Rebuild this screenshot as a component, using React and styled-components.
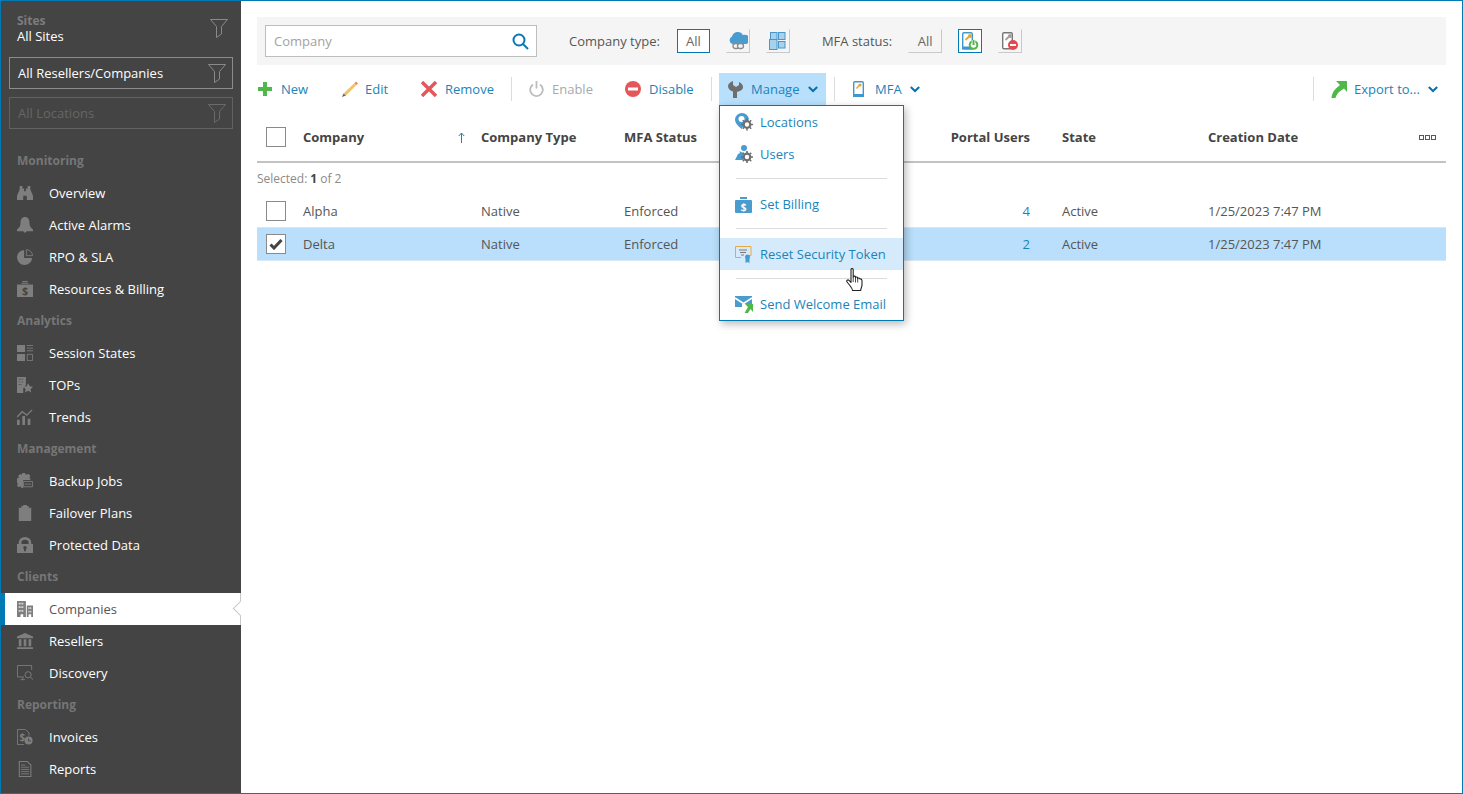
import React from "react";
import styled, { createGlobalStyle } from "styled-components";

const Global = createGlobalStyle`
  html, body { margin: 0; padding: 0; background: #fff; }
  * { box-sizing: border-box; }
  body { font-family: "Open Sans", "Noto Sans", sans-serif; font-size: 13px; color: #444; }
`;

const Frame = styled.div`
  width: 1463px; height: 794px; border: 1px solid #0079b5; display: flex; overflow: hidden; position: relative;
`;
const Sidebar = styled.aside`
  width: 240px; flex: none; background: #444; display: flex; flex-direction: column; padding-top: 12px;
`;
const SiteBlock = styled.div`
  height: 36px; margin: 0 13px 8px 16px; display: flex; justify-content: space-between; align-items: flex-start;
`;
const SiteLabel = styled.div`
  font-weight: 700; font-size: 12px; line-height: 15px; color: #7c7c7c;
`;
const SiteValue = styled.div`
  font-size: 13px; line-height: 16px; color: #fff;
`;
const SiteFunnel = styled.span`
  display: flex; margin-top: 6px;
`;
const FilterBox = styled.div`
  height: 32px; margin: 0 8px 8px 8px; padding: 0 6px 0 8px; display: flex; align-items: center; justify-content: space-between;
  border: 1px solid ${p => (p.$dim ? "#626262" : "#8c8c8c")};
  color: ${p => (p.$dim ? "#666" : "#fff")};
`;
const NavList = styled.nav`
  display: flex; flex-direction: column; margin-top: 8px;
`;
const NavHeading = styled.div`
  height: 32px; padding: 0 0 2px 16px; display: flex; align-items: center; font-weight: 700; font-size: 12px; color: #767676;
`;
const NavRow = styled.div`
  height: 32px; display: flex; align-items: center; position: relative; flex: none;
  padding-left: ${p => (p.$active ? "12px" : "16px")};
  background: ${p => (p.$active ? "#fff" : "transparent")};
  border-left: ${p => (p.$active ? "4px solid #0079b5" : "0")};
  border-right: ${p => (p.$active ? "1px solid #c8c8c8" : "0")};
  color: ${p => (p.$active ? "#555" : "#fff")};
`;
const NavIcon = styled.span`
  width: 32px; height: 18px; display: flex; align-items: center; flex: none;
`;
const Notch = styled.span`
  position: absolute; right: -6px; top: 10px; width: 11px; height: 11px; transform: rotate(45deg); background: #fff;
  border-left: 1px solid #c8c8c8; border-bottom: 1px solid #c8c8c8;
`;
const Main = styled.main`
  flex: 1; min-width: 0; padding: 16px 16px 0; position: relative;
`;
const FilterBar = styled.div`
  height: 48px; background: #f5f5f5; display: flex; align-items: center; padding-left: 8px;
`;
const Search = styled.div`
  width: 272px; height: 32px; background: #fff; border: 1px solid #bdbdbd; display: flex; align-items: center; justify-content: space-between;
  padding: 0 7px 0 8px; color: #a2a2a2; margin-right: 32px;
`;
const FilterLabel = styled.span`
  color: #555; margin-right: ${p => p.$gap}px;
`;
const Toggle = styled.button`
  width: ${p => p.$w || 24}px; height: 24px; padding: 0; margin: 0 ${p => p.$mr ?? 16}px 0 0; font: inherit; color: #666; background: transparent;
  display: flex; align-items: center; justify-content: center; cursor: default;
  border: 1px solid transparent;
  ${p => p.$on
    ? "border-color: #0079b5; background: #fff;"
    : "border-right-color: #c9c9c9; border-bottom-color: #c9c9c9;"}
`;
const Toolbar = styled.div`
  height: 32px; margin-top: 8px; display: flex; align-items: center; position: relative;
`;
const Action = styled.div`
  height: 32px; display: flex; align-items: center; flex: none; color: ${p => (p.$off ? "#a9a9a9" : "#1a84ba")};
  width: ${p => p.$w}px;
  padding-left: ${p => p.$pl ?? 0}px;
  background: ${p => (p.$open ? "#b8dffc" : "transparent")};
`;
const ActionIcon = styled.span`
  display: flex; align-items: center; width: ${p => p.$w}px; flex: none;
`;
const Chevron = styled.span`
  display: flex; margin-left: ${p => p.$ml}px;
`;
const Sep = styled.span`
  width: 1px; height: 24px; background: #dcdcdc; flex: none; margin: 0 ${p => p.$r ?? 7}px 0 ${p => p.$l ?? 0}px;
`;
const Spacer = styled.span` flex: 1; `;
const cols = "46px 178px 143px 300px 138px 146px 1fr";
const HeadRow = styled.div`
  display: grid; grid-template-columns: ${cols}; height: 50px; margin-top: 8px; align-items: center; border-bottom: 2px solid #c2c2c2;
  font-weight: 700; color: #444;
`;
const HeadCell = styled.div`
  display: flex; align-items: center; justify-content: ${p => (p.$right ? "flex-end" : "space-between")};
  padding-right: ${p => (p.$right ? "32px" : p.$pr || 0)}; height: 100%;
`;
const Check = styled.span`
  width: 20px; height: 20px; margin-left: 9px; border: 1px solid #8a8a8a; background: #fff; display: flex; align-items: center; justify-content: center;
`;
const Selected = styled.div`
  height: 32px; display: flex; align-items: center; font-size: 12px; color: #8a8a8a; gap: 3px; padding-bottom: 2px;
  b { color: #444; }
`;
const Row = styled.div`
  display: grid; grid-template-columns: ${cols}; height: 33px; align-items: center; color: #555;
  background: ${p => (p.$sel ? "#b9dffc" : "transparent")};
  border-bottom: 1px solid ${p => (p.$sel ? "#d8e9f5" : "#e4e4e4")};
`;
const Cell = styled.div`
  ${p => p.$right && "text-align: right; padding-right: 32px; color: #1a84ba;"}
`;
const Dots = styled.div`
  display: flex; gap: 1px; justify-content: flex-end; padding-right: 10px; align-items: center;
  i { width: 5px; height: 5px; border: 1px solid #0f6fa5; display: block; }
`;
const Menu = styled.div`
  position: absolute; left: 462px; top: 32px; width: 185px; height: 216px; background: #fff; border: 1px solid #0079b5;
  box-shadow: 2px 3px 8px rgba(0,0,0,.28); z-index: 5;
`;
const MenuItem = styled.div`
  height: 32px; display: flex; align-items: center; padding-left: 15px; color: #1a84ba;
  background: ${p => (p.$hover ? "#d5ebfc" : "transparent")};
`;
const MenuIcon = styled.span`
  width: 25px; display: flex; align-items: center; flex: none;
`;
const MenuSep = styled.div`
  height: 1px; background: #dcdcdc; margin: 8px 16px 9px;
`;
const Cursor = styled.span`
  position: absolute; left: 605px; top: 267px; z-index: 6; display: flex;
`;

const G = "#7e7e7e";
const Funnel = ({ c = "#8a8a8a" }) => (
  <svg width="18" height="19" viewBox="0 0 18 19" fill="none" stroke={c}><path d="M.5.500h17l-6 7v7.500l-5 3.500V7.500z" /></svg>
);
const I = ({ children }) => <svg width="16" height="16" viewBox="0 0 18 18">{children}</svg>;

const navIcons = {
  overview: <I><path fill={G} d="M3 1h3v3h2v3h2V4h2V1h3v4l3 7v5h-7v-5H7v5H0v-5l3-7z" /></I>,
  alarms: <I><path fill={G} d="M9 0c3.500 0 5 3 5 6 0 4 1 6 4 8v2H0v-2c3-2 4-4 4-8 0-3 1.500-6 5-6zM7 16h4l-2 2z" /></I>,
  rpo: <I><path fill={G} d="M8 1v9h9a8.500 8.500 0 1 1-9-9z" /><path fill="none" stroke={G} d="M10.500.8a7 7 0 0 1 7 6.700h-7z" /></I>,
  res: <I><path fill={G} d="M0 4h18v14H0z" /><path fill={G} d="M6 0h6v1H6zM5 2h8v1H5z" /><text x="9" y="15.500" fontSize="12" fontWeight="700" textAnchor="middle" fill="#444" fontFamily="Open Sans">$</text></I>,
  session: <I><path fill={G} d="M0 0h9v8H0zM0 10h9v8H0z" /><path fill="none" stroke={G} d="M11 .5h7M11 3.500h7M11 6.500h7M11.500 10.500h6v7h-6z" /></I>,
  tops: <I><path fill={G} d="M0 0h10v9l-3 4v5H0z" /><path fill="#444" d="M2 2h1v1H2zM4 2h1v1H4zM6 2h1v1H6zM2 5h1v1H2zM4 5h1v1H4zM6 5h1v1H6zM2 8h1v1H2zM4 8h1v1H4z" /><path fill={G} d="M12.500 7l1.800 3.500 3.700.5-2.700 2.700.7 3.800-3.500-1.900L9 17.500l.7-3.800L7 11l3.700-.5z" /></I>,
  trends: <I><path fill="none" stroke={G} strokeWidth="1.500" d="M0 9l6-6 5 4 6-6" /><path fill={G} d="M0 12h3v6H0zM6 8h3v10H6zM12 11h3v7h-3z" /></I>,
  backup: <I><path fill={G} d="M6 0h3l1 2 3-1 2 2-1 3h1v2H7v9H5l-1-2-2 1-2-2 1-2-1-1V6l2-.5-.5-2.500 2-2 2 1z" /><path fill="none" stroke={G} d="M7.500 9.500h10v6h-10zM9 12.500h7" /></I>,
  failover: <I><path fill={G} d="M2 3h3V1h2V0h4v1h2v2h3v15H2z" /></I>,
  protectedData: <I><path fill={G} d="M0 8h2V6a7 6 0 0 1 14 0v2h2v10H0zM5 8h8V6a4 3 0 0 0-8 0z" /><circle cx="9" cy="12" r="2" fill="#444" /><path fill="#444" d="M8 13h2v3H8z" /></I>,
  companies: <I><path fill={G} d="M0 0h10v18H7v-3H4v3H0zM11 5h7v13h-2v-3h-3v3h-2z" /><path fill="#fff" d="M2 2h1v2H2zM4 2h1v2H4zM6 2h1v2H6zM2 6h1v2H2zM4 6h1v2H4zM6 6h1v2H6zM2 10h1v2H2zM4 10h1v2H4zM6 10h1v2H6zM13 7h1v2h-1zM15 7h1v2h-1zM13 11h1v2h-1zM15 11h1v2h-1z" /></I>,
  resellers: <I><path fill={G} d="M9 0l9 4v2H0V4zM2 7h3v8H2zM7.500 7h3v8h-3zM13 7h3v8h-3zM0 16h18v2H0z" /></I>,
  discovery: <I><path fill="none" stroke={G} d="M.5.500h16v5M8 13.500H.5V.500M4 16.500h5" /><path fill={G} d="M6 14h1v2H6z" /><circle cx="12.500" cy="11" r="3.500" fill="none" stroke={G} /><path stroke={G} d="M15 13.500l3 3" /></I>,
  invoices: <I><path fill="none" stroke={G} d="M.5.500h9l4 4v3M8 17.500H.5V.500" /><text x="6" y="13" fontSize="11" fontWeight="700" textAnchor="middle" fill={G} fontFamily="Open Sans">$</text><circle cx="13" cy="13" r="4.500" fill={G} /><path stroke="#444" fill="none" d="M13 10.500V13.500h2.500" /></I>,
  reports: <I><path fill="none" stroke={G} strokeWidth="1.200" d="M2.600.600h9l4 4v12.800h-13z" /><path stroke={G} d="M4.500 7h9M4.500 9.500h9M4.500 12h9M4.500 14.500h9M4.500 4.500h5" /></I>,
};

const nav = [
  { h: "Monitoring" }, { t: "Overview", i: "overview" }, { t: "Active Alarms", i: "alarms" }, { t: "RPO & SLA", i: "rpo" }, { t: "Resources & Billing", i: "res" },
  { h: "Analytics" }, { t: "Session States", i: "session" }, { t: "TOPs", i: "tops" }, { t: "Trends", i: "trends" },
  { h: "Management" }, { t: "Backup Jobs", i: "backup" }, { t: "Failover Plans", i: "failover" }, { t: "Protected Data", i: "protectedData" },
  { h: "Clients" }, { t: "Companies", i: "companies", a: true }, { t: "Resellers", i: "resellers" }, { t: "Discovery", i: "discovery" },
  { h: "Reporting" }, { t: "Invoices", i: "invoices" }, { t: "Reports", i: "reports" },
];

const Down = ({ c = "#0a70a8" }) => <svg width="10" height="7" viewBox="0 0 10 7"><path d="M.8 1l4.200 4 4.200-4" fill="none" stroke={c} strokeWidth="2" /></svg>;
const B = "#4a9ccf";
const GearG = ({ x, y }) => (
  <g transform={`translate(${x} ${y})`}>
    <circle r="3.300" fill="#fff" stroke="#6f6f6f" strokeWidth="2.200" />
    <path stroke="#6f6f6f" strokeWidth="1.600" d="M0-6v2M0 4v2M-6 0h2M4 0h2M-4.200-4.200l1.400 1.400M2.800 2.800l1.400 1.400M4.200-4.200L2.800-2.800M-2.800 2.800l-1.400 1.400" />
  </g>
);

export default function App() {
  return (
    <Frame>
      <Global />
      <Sidebar>
        <SiteBlock>
          <div><SiteLabel>Sites</SiteLabel><SiteValue>All Sites</SiteValue></div>
          <SiteFunnel><Funnel /></SiteFunnel>
        </SiteBlock>
        <FilterBox>All Resellers/Companies<Funnel /></FilterBox>
        <FilterBox $dim>All Locations<Funnel c="#6a6a6a" /></FilterBox>
        <NavList>
          {nav.map((n, k) => n.h
            ? <NavHeading key={k}>{n.h}</NavHeading>
            : <NavRow key={k} $active={n.a}><NavIcon>{navIcons[n.i]}</NavIcon>{n.t}{n.a && <Notch />}</NavRow>)}
        </NavList>
      </Sidebar>
      <Main>
        <FilterBar>
          <Search>Company
            <svg width="17" height="17" viewBox="0 0 17 17" fill="none" stroke="#0a78b4" strokeWidth="2"><circle cx="7" cy="7" r="5.500" /><path d="M11 11l5 5" /></svg>
          </Search>
          <FilterLabel $gap={17}>Company type:</FilterLabel>
          <Toggle $on $w={33}>All</Toggle>
          <Toggle>
            <svg width="20" height="18" viewBox="0 0 20 18"><path fill={B} d="M4.500 12a4 4 0 0 1-.5-7.500 6 6 0 0 1 11-1.500 4.500 4.500 0 0 1 3.500 9z" /><g fill="#f5f5f5" stroke="#8a8a8a" strokeWidth="1.300"><rect x="5" y="11.500" width="6" height="5" rx="2.500" /><rect x="9.500" y="11.500" width="6" height="5" rx="2.500" /></g></svg>
          </Toggle>
          <Toggle $mr={32}>
            <svg width="17" height="18" viewBox="0 0 17 18"><g fill="#a8d1ee" stroke="#4a96c8"><rect x="1.500" y=".5" width="6.500" height="7" /><rect x="9.500" y=".5" width="6.500" height="7" /><rect x=".5" y="7.500" width="7.500" height="10" /><rect x="9.500" y="9.500" width="6.500" height="6.500" /></g></svg>
          </Toggle>
          <FilterLabel $gap={16}>MFA status:</FilterLabel>
          <Toggle $w={34}>All</Toggle>
          <Toggle $on>
            <svg width="20" height="20" viewBox="0 0 20 20"><rect x="2.700" y="1.700" width="9.600" height="16" rx="1.300" fill="#fff" stroke="#3f97cf" strokeWidth="1.400" /><path fill="#3f97cf" d="M2 15.500h11v3H2z" /><path d="M10 4.500l-4.500 4.500" stroke="#e8a735" strokeWidth="1.800" /><circle cx="10" cy="5" r="2" fill="#e8a735" /><circle cx="13.500" cy="14" r="3.800" fill="#fff" stroke="#4fb848" strokeWidth="2" /><path stroke="#fff" strokeWidth="3.500" d="M13.500 9v4" /><path stroke="#4fb848" strokeWidth="2" d="M13.500 9v5" /></svg>
          </Toggle>
          <Toggle $mr={0}>
            <svg width="20" height="20" viewBox="0 0 20 20"><rect x="2.700" y="1.700" width="9.600" height="16" rx="1.300" fill="#fff" stroke="#777" strokeWidth="1.400" /><path d="M10 4.500l-4.500 4.500" stroke="#a1a1a1" strokeWidth="1.800" /><circle cx="10" cy="5" r="2" fill="#a1a1a1" /><circle cx="13" cy="14" r="5" fill="#e4484f" /><path stroke="#fff" strokeWidth="2" d="M10 14h6" /></svg>
          </Toggle>
        </FilterBar>
        <Toolbar>
          <Action $w={83} $pl={1}><ActionIcon $w={23}><svg width="14" height="14" viewBox="0 0 14 14"><path fill="#4fb848" d="M5 0h4v5h5v4H9v5H5V9H0V5h5z" /></svg></ActionIcon>New</Action>
          <Action $w={81} $pl={1}><ActionIcon $w={24}><svg width="17" height="17" viewBox="0 0 17 17"><path fill="#f0c569" d="M13.500 2l2 2L5 14.500l-2.500-2z" /><path fill="#e58a6a" d="M13.500 2l1.500-1.500 2 2-1.500 1.500z" /><path fill="#666" d="M2.500 12.500l2.500 2-4 1.500z" /></svg></ActionIcon>Edit</Action>
          <Action $w={90}><ActionIcon $w={24}><svg width="16" height="16" viewBox="0 0 16 16"><path stroke="#e4565a" strokeWidth="3.400" d="M1 1l14 14M15 1L1 15" /></svg></ActionIcon>Remove</Action>
          <Sep $l={0} $r={17} />
          <Action $w={96} $off><ActionIcon $w={23}><svg width="15" height="16" viewBox="0 0 15 16" fill="none" stroke="#bdbdbd" strokeWidth="1.800"><path d="M4 3.500a6.300 6.300 0 1 0 7 0M7.500 0v7.500" /></svg></ActionIcon>Enable</Action>
          <Action $w={86}><ActionIcon $w={24}><svg width="16" height="16" viewBox="0 0 16 16"><circle cx="8" cy="8" r="8" fill="#e4565a" /><path fill="#fff" d="M3 6.500h10v3H3z" /></svg></ActionIcon>Disable</Action>
          <Sep $r={7} />
          <Action $open $w={107} $pl={9}><ActionIcon $w={23}><svg width="15" height="17" viewBox="0 0 15 17"><path fill="#6e6e6e" d="M5 0v4l3 2 3-2V1c2.500 1 4 3 4 5 0 3-3 4-6 5v6H5v-6.500C2 9.500 0 8 0 5c0-2 2-4 5-5z" /></svg></ActionIcon>Manage<Chevron $ml={9}><Down /></Chevron></Action>
          <Sep $l={8} $r={18} />
          <Action $w={75}><ActionIcon $w={22}><svg width="11" height="16" viewBox="0 0 11 16"><rect x=".7" y=".7" width="9.600" height="14.600" rx="1.300" fill="#fff" stroke="#3f97cf" strokeWidth="1.400" /><path fill="#3f97cf" d="M0 13h11v3H0z" /><path d="M7 3.500l-3.500 4" stroke="#e8a735" strokeWidth="1.500" /><circle cx="7" cy="4" r="1.600" fill="#e8a735" /></svg></ActionIcon>MFA<Chevron $ml={8}><Down /></Chevron></Action>
          <Spacer />
          <Sep $r={17} />
          <Action $w={115}><ActionIcon $w={23}><svg width="16" height="17" viewBox="0 0 16 17"><path fill="#4fb848" d="M5 0h11v11l-3-3.500L8 11c-1.500 1.500-3 3.500-3.500 6H.5C1 12 3 8.500 9 4z" /></svg></ActionIcon>Export to...<Chevron $ml={8}><Down /></Chevron></Action>
          <Menu>
            <MenuItem><MenuIcon><svg width="18" height="18" viewBox="0 0 18 18"><path fill={B} d="M7 0a7 7 0 0 1 7 6L6.500 16C3 13 0 10 0 6.500A7 7 0 0 1 7 0z" /><circle cx="6.500" cy="6" r="3" fill="#fff" /><GearG x={12} y={11.500} /></svg></MenuIcon>Locations</MenuItem>
            <MenuItem><MenuIcon><svg width="18" height="18" viewBox="0 0 18 18"><circle cx="9" cy="3" r="3" fill={B} /><path fill={B} d="M0 15l3-6 2-1-.5-2 1.500 1 3 1-1 7z" /><GearG x={12} y={12} /></svg></MenuIcon>Users</MenuItem>
            <MenuSep />
            <MenuItem><MenuIcon><svg width="17" height="17" viewBox="0 0 17 17"><path fill={B} d="M1 4h15a1 1 0 0 1 1 1v11a1 1 0 0 1-1 1H1a1 1 0 0 1-1-1V5a1 1 0 0 1 1-1zM5 1h7v2H5z" /><text x="8.500" y="14.500" fontSize="10" fontWeight="700" textAnchor="middle" fill="#fff" fontFamily="Open Sans">$</text></svg></MenuIcon>Set Billing</MenuItem>
            <MenuSep />
            <MenuItem $hover><MenuIcon><svg width="18" height="18" viewBox="0 0 18 18"><path fill="none" stroke="#e4a945" d="M.5 1.500h15.500v9h-5M6 12.500H.5v-11" /><path stroke="#777" d="M4 5h8M5 7.500h6M6 10h3" /><circle cx="12.500" cy="12" r="2.500" fill="#4a9ccf" /><path fill="#4a9ccf" d="M10.500 14h4v4l-2-1-2 1z" /></svg></MenuIcon>Reset Security Token</MenuItem>
            <MenuSep />
            <MenuItem><MenuIcon><svg width="18" height="18" viewBox="0 0 18 18"><path fill={B} d="M0 1h17v11H0z" /><path stroke="#fff" strokeWidth="1.500" fill="none" d="M0 3l8.500 5.500L17 3" /><path fill="#fff" d="M7 9h11v9H7z" /><path fill="#4fb848" d="M10 9h8v8l-2.500-3L13 18H9.500l3.500-6z" /></svg></MenuIcon>Send Welcome Email</MenuItem>
          </Menu>
        </Toolbar>
        <HeadRow>
          <HeadCell><Check /></HeadCell>
          <HeadCell $pr="16px">Company<svg width="7" height="11" viewBox="0 0 7 11" fill="none" stroke="#2d7fae"><path d="M3.500 11V1M.8 4l2.700-3 2.700 3" /></svg></HeadCell>
          <HeadCell>Company Type</HeadCell>
          <HeadCell>MFA Status</HeadCell>
          <HeadCell $right>Portal Users</HeadCell>
          <HeadCell>State</HeadCell>
          <HeadCell>Creation Date<Dots><i /><i /><i /></Dots></HeadCell>
        </HeadRow>
        <Selected>Selected: <b>1</b> of 2</Selected>
        <Row>
          <div><Check /></div><Cell>Alpha</Cell><Cell>Native</Cell><Cell>Enforced</Cell><Cell $right>4</Cell><Cell>Active</Cell><Cell>1/25/2023 7:47 PM</Cell>
        </Row>
        <Row $sel>
          <div><Check><svg width="14" height="12" viewBox="0 0 14 12"><path fill="none" stroke="#444" strokeWidth="3" d="M1.500 6.500l3.500 3.500 7.500-8" /></svg></Check></div><Cell>Delta</Cell><Cell>Native</Cell><Cell>Enforced</Cell><Cell $right>2</Cell><Cell>Active</Cell><Cell>1/25/2023 7:47 PM</Cell>
        </Row>
        <Cursor>
          <svg width="18" height="24" viewBox="0 0 18 24"><path fill="#fff" stroke="#222" strokeWidth="1.100" strokeLinejoin="round" d="M5 1.500c0-1.300 2.200-1.300 2.200 0V9c0-1.200 2.300-1.200 2.300 0v.8c0-1.100 2.200-1.100 2.200 0v.9c0-1 2.300-1 2.300.2.600 0 2 .5 2 1.600v4.500c0 2-1.300 3-1.300 5.500H6.500c0-2-1.500-3.500-3-5.500L1 14c-.8-1.500.8-2.700 2-1.600l2 2z" /><path stroke="#222" strokeWidth=".8" d="M7.200 9v5M9.500 10v4.500M11.700 10.500v4" /></svg>
        </Cursor>
      </Main>
    </Frame>
  );
}
